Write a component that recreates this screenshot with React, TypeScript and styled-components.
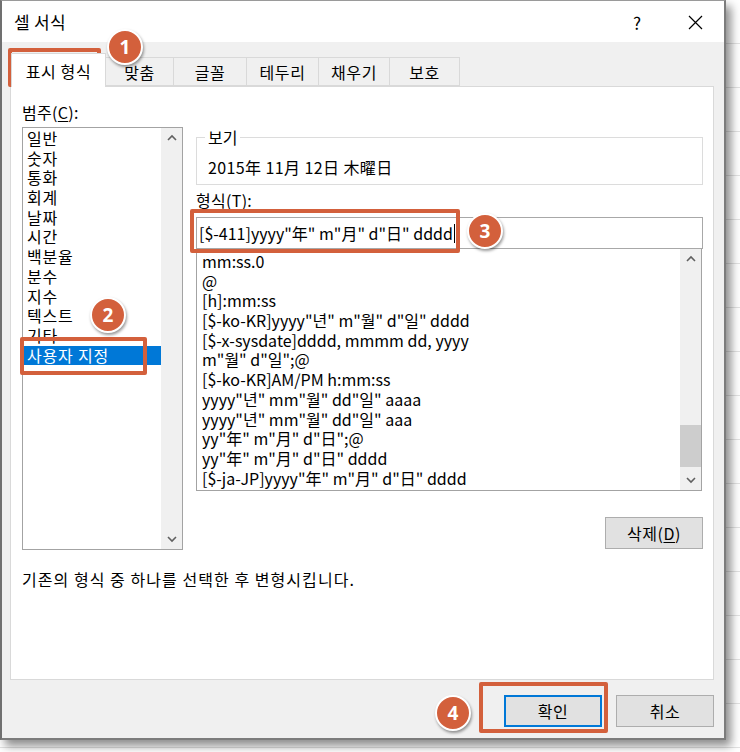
import React from 'react';
import styled, { createGlobalStyle } from 'styled-components';

const GlobalStyle = createGlobalStyle`
  html, body {
    margin: 0;
    padding: 0;
    background: #ffffff;
  }
  body {
    font-family: "Noto Sans CJK KR", "Noto Sans", sans-serif;
    color: #000;
  }
`;

const ACCENT = '#d3603c';

const Page = styled.div`
  position: relative;
  width: 740px;
  height: 752px;
  overflow: hidden;
  background-color: #ffffff;
  background-image: repeating-linear-gradient(
    to bottom,
    transparent 0,
    transparent 43px,
    #e2e2e2 43px,
    #e2e2e2 44px
  );
`;

const Dialog = styled.div`
  width: 722px;
  height: 737px;
  display: flex;
  flex-direction: column;
  border-left: 2px solid #707070;
  border-right: 2px solid #7c7c7c;
  border-bottom: 2px solid #7c7c7c;
  border-top: 1px solid #9a9a9a;
  box-shadow: 5px 6px 9px rgba(0, 0, 0, 0.45);
  background: #f0f0f0;
`;

const TitleBar = styled.div`
  height: 41px;
  flex: none;
  display: flex;
  align-items: center;
  background: #ffffff;
  padding-left: 12px;
`;

const Title = styled.div`
  flex: 1;
  font-size: 17px;
  line-height: 20px;
  letter-spacing: 0.3px;
  margin-top: 1px;
`;

const TitleButton = styled.div`
  width: 58px;
  display: flex;
  justify-content: center;
  align-items: center;
  font-size: 17px;
  margin-top: 2px;
`;

const Body = styled.div`
  flex: 1;
  display: flex;
  flex-direction: column;
  padding: 0 10px 0 8px;
`;

const TabRow = styled.div`
  display: flex;
  align-items: flex-end;
  height: 44px;
  padding-left: 1px;
`;

const Tab = styled.div<{ $active?: boolean; $w: number }>`
  width: ${({ $w }) => $w}px;
  height: ${({ $active }) => ($active ? 34 : 29)}px;
  box-sizing: border-box;
  display: flex;
  align-items: center;
  justify-content: center;
  font-size: 16px;
  letter-spacing: 0.6px;
  border: 1px solid #d9d9d9;
  border-bottom: ${({ $active }) => ($active ? 'none' : '1px solid #d9d9d9')};
  border-left: ${({ $active }) => ($active ? '1px solid #d9d9d9' : 'none')};
  background: ${({ $active }) => ($active ? '#ffffff' : '#f0f0f0')};
  margin-bottom: ${({ $active }) => ($active ? '-1px' : '0')};
  padding-top: ${({ $active }) => ($active ? '0' : '1px')};
  position: relative;
  z-index: ${({ $active }) => ($active ? 1 : 0)};
  &:nth-child(2) {
    border-left: none;
  }
`;

const Panel = styled.div`
  height: 594px;
  box-sizing: border-box;
  background: #ffffff;
  border: 1px solid #d9d9d9;
  display: flex;
  flex-direction: column;
  padding: 15px 10px 0 11px;
`;

const Columns = styled.div`
  display: flex;
  gap: 13px;
`;

const LeftCol = styled.div`
  width: 161px;
  display: flex;
  flex-direction: column;
`;

const RightCol = styled.div`
  flex: 1;
  display: flex;
  flex-direction: column;
`;

const Label = styled.div`
  font-size: 16px;
  line-height: 20px;
  height: 20px;
  letter-spacing: 0.3px;
  u {
    text-decoration-thickness: 1px;
    text-underline-offset: 2px;
  }
`;

const ListBox = styled.div<{ $h: number }>`
  height: ${({ $h }) => $h}px;
  box-sizing: border-box;
  border: 1px solid #a3a3a3;
  display: flex;
  background: #fff;
`;

const ListItems = styled.div<{ $pad: number; $x: number }>`
  flex: 1;
  padding-top: ${({ $pad }) => $pad}px;
  padding-left: ${({ $x }) => $x}px;
`;

const Item = styled.div<{ $selected?: boolean }>`
  font-size: 16px;
  line-height: 19.7px;
  height: 19.7px;
  letter-spacing: 0.8px;
  white-space: nowrap;
  padding-left: 3px;
  margin-left: -3px;
  background: ${({ $selected }) => ($selected ? '#0078d7' : 'transparent')};
  color: ${({ $selected }) => ($selected ? '#ffffff' : '#000000')};
`;

const FormatItem = styled(Item)`
  letter-spacing: 0;
`;

const ScrollTrack = styled.div`
  width: 21px;
  flex: none;
  background: #f0f0f0;
  display: flex;
  flex-direction: column;
  justify-content: space-between;
  align-items: center;
  padding: 6px 0;
  box-sizing: border-box;
  position: relative;
`;

const Thumb = styled.div<{ $top: number; $h: number }>`
  position: absolute;
  left: 0;
  right: 0;
  top: ${({ $top }) => $top}px;
  height: ${({ $h }) => $h}px;
  background: #cdcdcd;
`;

const GroupBox = styled.fieldset`
  margin: 26px 0 0 0;
  height: 57px;
  box-sizing: border-box;
  border: 1px solid #dcdcdc;
  padding: 0 0 0 11px;
  min-width: 0;
`;

const Legend = styled.legend`
  font-size: 16px;
  line-height: 18px;
  padding: 0 3px;
  margin-left: -3px;
`;

const Preview = styled.div`
  font-size: 16px;
  line-height: 20px;
  letter-spacing: 0.4px;
  margin-top: 11px;
`;

const FormatLabel = styled(Label)`
  margin-top: 5px;
`;

const Input = styled.div`
  height: 32px;
  margin-top: 7px;
  box-sizing: border-box;
  border: 1px solid #a8a8a8;
  display: flex;
  align-items: center;
  padding-left: 2px;
  font-size: 16px;
  white-space: nowrap;
`;

const Caret = styled.span`
  display: inline-block;
  width: 1px;
  height: 19px;
  background: #000;
  margin-left: 1px;
`;

const FormatList = styled(ListBox)`
  width: 506px;
  border-top: none;
`;

const ButtonRow = styled.div<{ $top: number }>`
  display: flex;
  justify-content: flex-end;
  gap: 14px;
  margin-top: ${({ $top }) => $top}px;
`;

const Button = styled.div<{ $primary?: boolean }>`
  width: 98px;
  height: 32px;
  box-sizing: border-box;
  display: flex;
  align-items: center;
  justify-content: center;
  font-size: 16px;
  letter-spacing: 0.5px;
  background: #e1e1e1;
  border: ${({ $primary }) => ($primary ? '2px solid #0078d7' : '1px solid #adadad')};
  u {
    text-decoration-thickness: 1px;
    text-underline-offset: 2px;
  }
`;

const Description = styled.div`
  font-size: 16px;
  line-height: 20px;
  letter-spacing: 1.05px;
  margin-top: 19px;
`;

const Box = styled.div<{ $x: number; $y: number; $w: number; $h: number }>`
  position: absolute;
  left: ${({ $x }) => $x}px;
  top: ${({ $y }) => $y}px;
  width: ${({ $w }) => $w}px;
  height: ${({ $h }) => $h}px;
  box-sizing: border-box;
  border: 4px solid ${ACCENT};
  border-radius: 2px;
  pointer-events: none;
`;

const Badge = styled.div<{ $x: number; $y: number }>`
  position: absolute;
  left: ${({ $x }) => $x - 18}px;
  top: ${({ $y }) => $y - 18}px;
  width: 36px;
  height: 36px;
  box-sizing: border-box;
  border-radius: 50%;
  background: ${ACCENT};
  border: 2px solid #ffffff;
  box-shadow: 1px 2px 3px rgba(0, 0, 0, 0.4);
  color: #fff;
  font-family: "Open Sans", "Noto Sans", sans-serif;
  font-weight: 700;
  font-size: 19px;
  display: flex;
  align-items: center;
  justify-content: center;
`;

const Chevron = ({ up }: { up?: boolean }) => (
  <svg width="10" height="7" viewBox="0 0 10 7">
    <polyline
      points={up ? '1,6 5,2 9,6' : '1,1 5,5 9,1'}
      fill="none"
      stroke="#606060"
      strokeWidth="1.6"
    />
  </svg>
);

const CloseIcon = () => (
  <svg width="15" height="15" viewBox="0 0 15 15">
    <path d="M1 1 L14 14 M14 1 L1 14" stroke="#000" strokeWidth="1.2" />
  </svg>
);

const tabs = [
  { label: '표시 형식', w: 95 },
  { label: '맞춤', w: 68 },
  { label: '글꼴', w: 73 },
  { label: '테두리', w: 72 },
  { label: '채우기', w: 71 },
  { label: '보호', w: 70 },
];

const categories = [
  '일반',
  '숫자',
  '통화',
  '회계',
  '날짜',
  '시간',
  '백분율',
  '분수',
  '지수',
  '텍스트',
  '기타',
  '사용자 지정',
];

const formats = [
  'mm:ss.0',
  '@',
  '[h]:mm:ss',
  '[$-ko-KR]yyyy"년" m"월" d"일" dddd',
  '[$-x-sysdate]dddd, mmmm dd, yyyy',
  'm"월" d"일";@',
  '[$-ko-KR]AM/PM h:mm:ss',
  'yyyy"년" mm"월" dd"일" aaaa',
  'yyyy"년" mm"월" dd"일" aaa',
  'yy"年" m"月" d"日";@',
  'yy"年" m"月" d"日" dddd',
  '[$-ja-JP]yyyy"年" m"月" d"日" dddd',
];

export default function App() {
  return (
    <>
      <GlobalStyle />
      <Page>
        <Dialog>
          <TitleBar>
            <Title>셀 서식</Title>
            <TitleButton>?</TitleButton>
            <TitleButton>
              <CloseIcon />
            </TitleButton>
          </TitleBar>
          <Body>
            <TabRow>
              {tabs.map((t, i) => (
                <Tab key={t.label} $w={t.w} $active={i === 0}>
                  {t.label}
                </Tab>
              ))}
            </TabRow>
            <Panel>
              <Columns>
                <LeftCol>
                  <Label>
                    범주(<u>C</u>):
                  </Label>
                  <ListBox $h={423} style={{ marginTop: 5 }}>
                    <ListItems $pad={1} $x={4}>
                      {categories.map((c, i) => (
                        <Item key={c} $selected={i === categories.length - 1}>
                          {c}
                        </Item>
                      ))}
                    </ListItems>
                    <ScrollTrack>
                      <Chevron up />
                      <Chevron />
                    </ScrollTrack>
                  </ListBox>
                </LeftCol>
                <RightCol>
                  <GroupBox>
                    <Legend>보기</Legend>
                    <Preview>2015年 11月 12日 木曜日</Preview>
                  </GroupBox>
                  <FormatLabel>
                    형식(<u>T</u>):
                  </FormatLabel>
                  <Input>
                    [$-411]yyyy"年" m"月" d"日" dddd
                    <Caret />
                  </Input>
                  <FormatList $h={242}>
                    <ListItems $pad={3} $x={5}>
                      {formats.map((f) => (
                        <FormatItem key={f}>{f}</FormatItem>
                      ))}
                    </ListItems>
                    <ScrollTrack>
                      <Chevron up />
                      <Thumb $top={176} $h={42} />
                      <Chevron />
                    </ScrollTrack>
                  </FormatList>
                  <ButtonRow $top={26}>
                    <Button>
                      삭제(<u>D</u>)
                    </Button>
                  </ButtonRow>
                </RightCol>
              </Columns>
              <Description>기존의 형식 중 하나를 선택한 후 변형시킵니다.</Description>
            </Panel>
            <ButtonRow $top={15}>
              <Button $primary>확인</Button>
              <Button>취소</Button>
            </ButtonRow>
          </Body>
        </Dialog>

        <Box $x={8} $y={48} $w={93} $h={39} />
        <Badge $x={125} $y={47}>1</Badge>
        <Box $x={20} $y={337} $w={127} $h={38} />
        <Badge $x={108} $y={315}>2</Badge>
        <Box $x={190} $y={209} $w={270} $h={44} />
        <Badge $x={485} $y={231}>3</Badge>
        <Box $x={479} $y={682} $w={129} $h={51} />
        <Badge $x={453} $y={713}>4</Badge>
      </Page>
    </>
  );
}
